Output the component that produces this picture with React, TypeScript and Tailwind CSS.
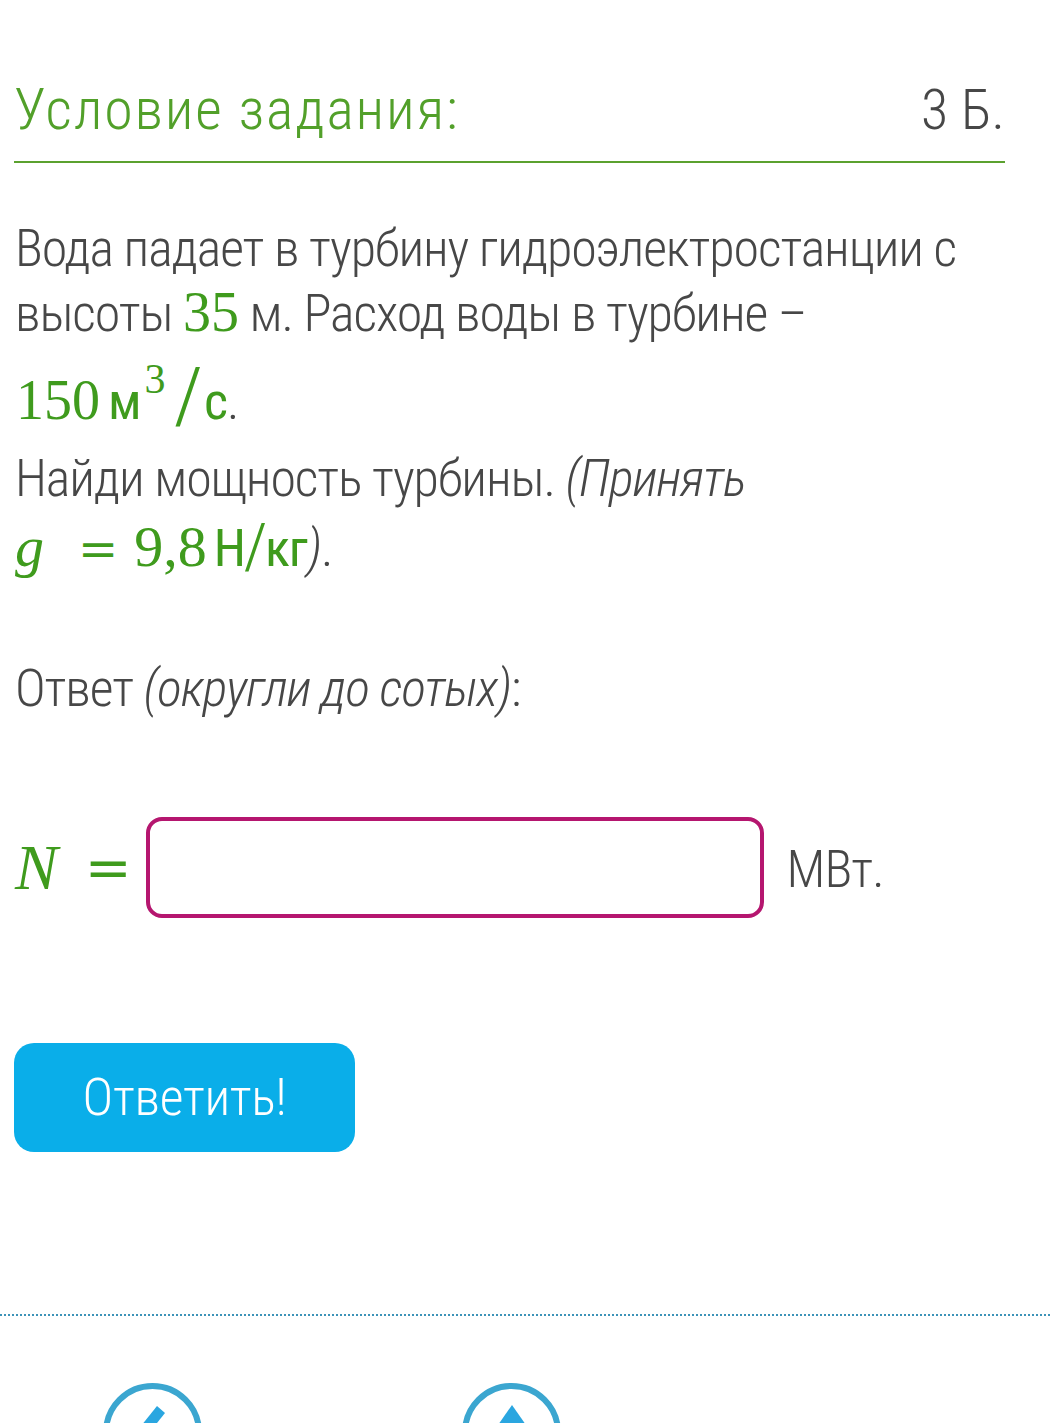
import React from "react";

const G = "text-[#3f9b1d]";

function Serif({ children, className = "" }: { children: React.ReactNode; className?: string }) {
  return (
    <span className={`font-['Liberation_Serif',serif] font-normal tracking-normal leading-[0] [font-stretch:normal] ${className}`}>
      {children}
    </span>
  );
}

function Eq({ className = "" }: { className?: string }) {
  return (
    <span className={`font-['DejaVu_Serif',serif] font-normal tracking-normal leading-[0] [font-stretch:normal] ${className}`}>
      =
    </span>
  );
}

export default function App() {
  return (
    <div className="w-[1050px] h-[1423px] overflow-hidden bg-white font-['Roboto',sans-serif] font-light [font-stretch:condensed] text-[#474747]">
      <div className="pl-[14px] pr-[45px]">
        <div className="pt-[81px] flex justify-between items-baseline leading-[56px]">
          <span className="text-[#52a02a] text-[58px] tracking-[1.8px]">Условие задания:</span>
          <span className="text-[56px]">3 Б.</span>
        </div>
        <div className="mt-[23px] h-[2px] bg-[#5ba12f]" />
        <div className="mt-[53px] text-[52px] leading-[65px] tracking-[-1.1px] pl-[1px]">
          <div className="h-[65px] whitespace-nowrap">Вода падает в турбину гидроэлектростанции с</div>
          <div className="h-[65px] whitespace-nowrap">
            высоты <Serif className={`${G} text-[56px]`}>35</Serif> м. Расход воды в турбине –
          </div>
          <div className="h-[88px] pt-[23px] whitespace-nowrap">
            <Serif className={`${G} text-[56px] pl-[1px]`}>150</Serif>
            <span className={`${G} ml-[8px] font-normal`}>м</span>
            <Serif className={`${G} text-[42px] align-[26px] ml-[4px]`}>3</Serif>
            <Serif className={`${G} text-[88px] ml-[10px] font-['DejaVu_Sans',sans-serif] font-extralight align-[-6px]`}>/</Serif>
            <span className={`${G} ml-[4px] font-normal`}>с</span>.
          </div>
          <div className="h-[65px] mt-[12px] whitespace-nowrap">
            Найди мощность турбины. <span className="italic">(Принять</span>
          </div>
          <div className="h-[65px] mt-[5px] whitespace-nowrap">
            <Serif className={`${G} text-[58px] italic`}>g</Serif>
            <Eq className={`${G} text-[48px] ml-[34px]`} />
            <Serif className={`${G} text-[58px] ml-[16px]`}>9,8</Serif>
            <span className={`${G} ml-[7px] font-normal`}>Н</span>
            <Serif className={`${G} text-[72px] font-['DejaVu_Sans',sans-serif] font-extralight align-[-4px]`}>/</Serif>
            <span className={`${G} font-normal`}>кг</span>
            <span className="italic">)</span>.
          </div>
          <div className="h-[65px] mt-[75px] whitespace-nowrap">
            Ответ <span className="italic">(округли до сотых)</span>:
          </div>
        </div>
        <div className="mt-[96px] flex items-center">
          <Serif className={`${G} text-[64px] italic !leading-none pl-[1px]`}>N</Serif>
          <Eq className={`${G} text-[56px] !leading-none ml-[27px]`} />
          <div className="ml-[14px] w-[618px] h-[101px] border-[4px] border-[#b5166f] rounded-[16px] bg-white" />
          <span className="ml-[23px] text-[52px] tracking-[-1px] leading-none mt-[4px]">МВт.</span>
        </div>
        <button className="mt-[125px] w-[341px] h-[109px] bg-[#0aaee9] rounded-[20px] text-white text-[52px] tracking-[-0.3px] leading-none flex items-center justify-center">
          Ответить!
        </button>
      </div>
      <div className="mt-[162px] border-t-2 border-dotted border-[#3d93b8]" />
      <div className="mt-[67px] flex pl-[103px] gap-[260px]">
        <div className="w-[99px] h-[110px] rounded-full border-[6px] border-[#3ba6d0] flex justify-center">
          <svg width="60" height="60" viewBox="0 0 60 60" className="mt-[10px]">
            <polygon points="34,7 42,14 26,34 18,27" fill="#2aa6e0" />
          </svg>
        </div>
        <div className="w-[99px] h-[110px] rounded-full border-[6px] border-[#3ba6d0] flex justify-center">
          <svg width="60" height="60" viewBox="0 0 60 60" className="mt-[16px]">
            <polygon points="30,0 44,20 30,40 16,20" fill="#2aa6e0" />
          </svg>
        </div>
      </div>
    </div>
  );
}
